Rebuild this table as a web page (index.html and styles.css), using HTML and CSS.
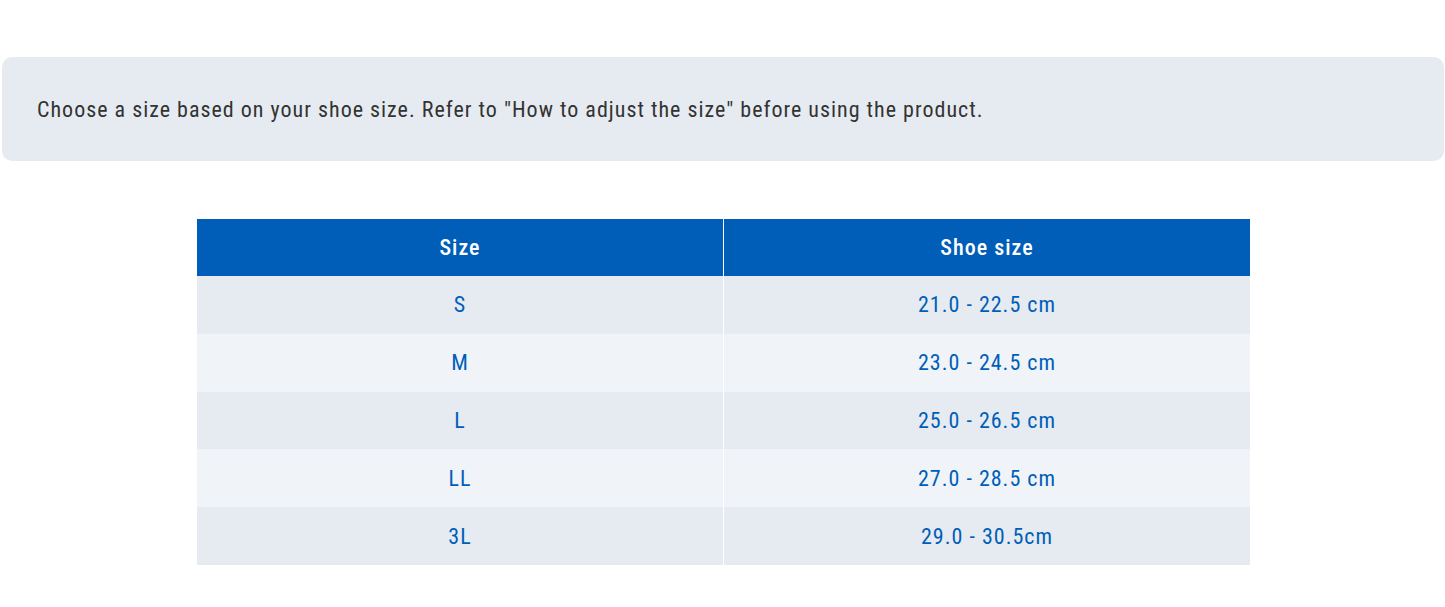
FILE: index.html
```html
<!DOCTYPE html>
<html lang="en">
<head>
<meta charset="utf-8">
<title>Size chart</title>
<link rel="stylesheet" href="styles.css">
</head>
<body>
<main class="page">
  <div class="note">
    <p class="note-text">Choose a size based on your shoe size. Refer to "How to adjust the size" before using the product.</p>
  </div>
  <table class="chart">
    <thead>
      <tr><th>Size</th><th>Shoe size</th></tr>
    </thead>
    <tbody>
      <tr><td>S</td><td>21.0 - 22.5 cm</td></tr>
      <tr><td>M</td><td>23.0 - 24.5 cm</td></tr>
      <tr><td>L</td><td>25.0 - 26.5 cm</td></tr>
      <tr><td>LL</td><td>27.0 - 28.5 cm</td></tr>
      <tr><td>3L</td><td>29.0 - 30.5cm</td></tr>
    </tbody>
  </table>
</main>
</body>
</html>
```

FILE: styles.css
```css
html, body {
  margin: 0;
  padding: 0;
  background: #ffffff;
}
body {
  font-family: "Roboto Condensed", "Liberation Sans Narrow", Roboto, sans-serif;
  font-stretch: condensed;
}
.page {
  padding: 57px 1px 0 2px;
}
.note {
  background: #e6ebf2;
  border-radius: 10px;
  height: 104px;
  display: flex;
  align-items: center;
  padding: 0 35px;
}
.note-text {
  margin: 0;
  font-size: 22px;
  color: #333333;
  letter-spacing: 1px;
}
.chart {
  margin: 58px 0 0 195px;
  width: 1053px;
  border-collapse: collapse;
  table-layout: fixed;
}
.chart th, .chart td {
  padding: 0;
  text-align: center;
  font-size: 22px;
  letter-spacing: 1px;
}
.chart th + th, .chart td + td {
  border-left: 1px solid #ffffff;
}
.chart th {
  height: 57px;
  background: #005eb8;
  color: #ffffff;
  font-weight: 500;
}
.chart td {
  height: 57.8px;
  color: #005eb8;
  font-weight: 400;
}
.chart tbody tr:nth-child(odd) td {
  background: #e6ebf2;
}
.chart tbody tr:nth-child(even) td {
  background: #f0f4f8;
}
```
